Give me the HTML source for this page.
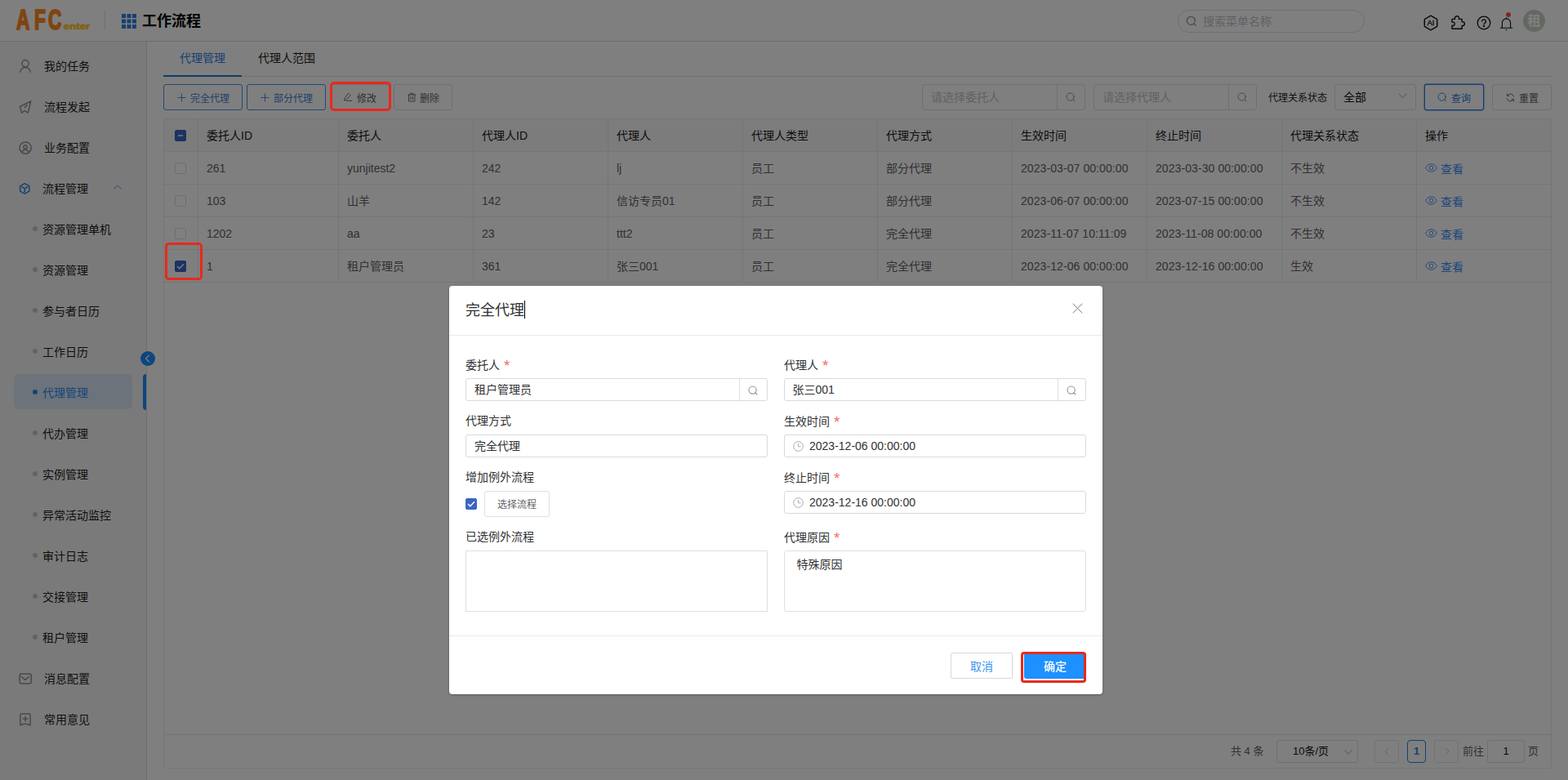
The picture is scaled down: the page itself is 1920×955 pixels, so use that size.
<!DOCTYPE html>
<html lang="zh-CN">
<head>
<meta charset="utf-8">
<title>工作流程 - 代理管理</title>
<style>
*{box-sizing:border-box;margin:0;padding:0}
html,body{width:1920px;height:955px;overflow:hidden;background:#fff}
body{font-family:"Liberation Sans","Noto Sans CJK SC",sans-serif;font-size:14px;color:#303133;position:relative}
.abs{position:absolute}
svg{display:block;overflow:visible}
.t{position:absolute;white-space:nowrap;line-height:20px;height:20px}
/* header */
#hd{position:absolute;left:0;top:0;width:1920px;height:51px;background:#fefefe;border-bottom:1px solid #dcdcdc}
#hd .vline{position:absolute;left:128px;top:12px;width:1px;height:24px;background:#e0e0e0}
#hd .title{position:absolute;left:174px;top:13px;font-size:18px;font-weight:bold;line-height:26px;color:#000}
#search{position:absolute;left:1442px;top:12px;width:229px;height:28px;border:1px solid #dcdfe6;border-radius:14px}
#search span{position:absolute;left:30px;top:0;line-height:26px;font-size:14px;color:#c0c4cc}
/* sidebar */
#sb{position:absolute;left:0;top:51px;width:180px;height:904px;background:#f5f5f5;border-right:1px solid #dcdcdc}
.mi{position:absolute;left:0;width:179px;height:50px;line-height:50px;font-size:14px;color:#1c1c1c;white-space:nowrap}
.mi .ic{position:absolute;left:23px;top:17px;width:16px;height:16px;color:#909399}
.mi .tx{position:absolute;left:54px;top:0}
.mi.sub .tx{left:52px}
.mi .dot{position:absolute;left:40px;top:21px;width:6px;height:6px;border-radius:50%;background:#c6c6c6}
.mi.act{color:#2d8cf0}
.mi.act .dot{background:#1f8af5}
/* main */
#main{position:absolute;left:180px;top:51px;width:1740px;height:904px;background:#fff}
.btn{position:absolute;top:103px;height:32px;border:1px solid #dcdfe6;border-radius:3px;font-size:12px;color:#606266;white-space:nowrap;line-height:34px;background:#fff;overflow:hidden}
.btn.pri{border-color:#4a90e2;color:#3a7fd5}
.inp{position:absolute;top:103px;height:32px;border:1px solid #dcdfe6;border-radius:4px;background:#fff}
/* table */
#tb{position:absolute;left:200px;top:145px;width:1700px;height:796px;border:1px solid #e8eaee;border-radius:0 0 4px 4px}
.row{position:absolute;left:0;width:1698px;height:40px;border-bottom:1px solid #e8eaee;font-size:14px;color:#606266;line-height:41px;white-space:nowrap}
.row.h{background:#f8f8f9;color:#1a1a1a}
.row.sel{background:transparent}
.c{position:absolute;top:0;height:39px;border-left:1px solid #e8eaee;padding-left:10px;overflow:hidden}
.cb{position:absolute;left:13px;top:13px;width:14px;height:14px;border:1px solid #dcdfe6;border-radius:2px;background:#fff}
.cb.on{background:#3a67c0;border-color:#3a67c0}
.lk{color:#3d8ff5;position:relative;top:1px}
/* mask + dialog */
#mask{z-index:10;position:absolute;left:0;top:0;width:1920px;height:955px;background:rgba(0,0,0,.5)}
#dlg{z-index:11;position:absolute;left:550px;top:350px;width:800px;height:500px;background:#fff;border-radius:4px;box-shadow:0 1px 3px rgba(0,0,0,.3)}
#dlg .lab{position:absolute;font-size:14px;color:#303133;line-height:20px;white-space:nowrap}
#dlg .lab i{font-style:normal;color:#f56c6c;margin-left:5px;font-size:19px;line-height:20px;position:relative;top:2px;font-family:"Liberation Sans",sans-serif}
#dlg .fi{position:absolute;height:28px;width:370px;border:1px solid #d9dadd;border-radius:3px;font-size:14px;line-height:26px;color:#303133;white-space:nowrap}
.red{z-index:12;position:absolute;border:3px solid #e8291c;border-radius:5px}
</style>
</head>
<body>
<div id="hd">
<svg class="abs" style="left:18px;top:8px" width="96" height="32" viewBox="0 0 96 32" font-family="Liberation Sans, sans-serif" font-weight="bold"><text transform="scale(.66 1)" x="3.200 36.500 62" y="27.700" font-size="34.500" fill="#ff8a22" stroke="#ff8a22" stroke-width="1.700" stroke-linejoin="round" vector-effect="non-scaling-stroke">AFC</text><text x="59.800" y="28.200" font-size="11" fill="#ffc62e" stroke="#ffc62e" stroke-width="0.700" textLength="32.500" lengthAdjust="spacingAndGlyphs">enter</text></svg>
<div class="vline"></div>
<svg class="abs" style="left:149px;top:17px" width="18" height="18" viewBox="0 0 18 18" fill="#2f7fe6"><rect x="0" y="0" width="5" height="5"/><rect x="6.5" y="0" width="5" height="5"/><rect x="13" y="0" width="5" height="5"/><rect x="0" y="6.5" width="5" height="5"/><rect x="6.5" y="6.5" width="5" height="5"/><rect x="13" y="6.5" width="5" height="5"/><rect x="0" y="13" width="5" height="5"/><rect x="6.5" y="13" width="5" height="5"/><rect x="13" y="13" width="5" height="5"/></svg>
<div class="title">工作流程</div>
<div id="search"><svg class="abs" style="left:9.200px;top:5.800px" width="14" height="14" viewBox="0 0 14 14" fill="none" stroke="#909399" stroke-width="1.3"><circle cx="6.3" cy="6.3" r="5"/><path d="M10 10l2.6 2.6"/></svg><span>搜索菜单名称</span></div>
<svg class="abs" style="left:1742px;top:18px" width="20" height="20" viewBox="0 0 20 20" fill="none" stroke="#111" stroke-width="1.400" stroke-linejoin="round" stroke-linecap="round"><path d="M2.300 7.800V5.600L10 1.200l7.700 4.400v6.200M17.700 12.400v2L10 18.800l-7.700-4.400V8.400"/><circle cx="2.300" cy="8.800" r=".9" fill="#111" stroke="none"/><circle cx="17.700" cy="11.400" r=".9" fill="#111" stroke="none"/><text x="10" y="13.300" font-family="Liberation Sans, sans-serif" font-size="9.500" text-anchor="middle" fill="#111" stroke="#111" stroke-width=".3">AI</text></svg>
<svg class="abs" style="left:1776px;top:17px" width="20" height="20" viewBox="0 0 20 20" fill="none" stroke="#111" stroke-width="1.400" stroke-linejoin="round" stroke-linecap="round"><path d="M2 6.400h3.600a2.600 2.600 0 1 1 4.800 0h3.800v3.300a2.500 2.500 0 1 1 0 4.800v3.700H2v-3.900a2.300 2.300 0 1 0 0-4.200z"/></svg>
<svg class="abs" style="left:1808px;top:19px" width="18" height="18" viewBox="0 0 18 18" fill="none" stroke="#111" stroke-width="1.3" stroke-linecap="round"><circle cx="9" cy="9" r="7.8"/><path d="M6.6 7.2a2.4 2.4 0 1 1 3.4 2.2c-.7.4-1 .8-1 1.7"/><circle cx="9" cy="13.2" r=".5" fill="#111"/></svg>
<svg class="abs" style="left:1836px;top:20px" width="18" height="18" viewBox="0 0 18 18" fill="none" stroke="#111" stroke-width="1.100" stroke-linecap="round" stroke-linejoin="round"><path d="M1.300 14.200h14.400M3.400 14.200V8a5.100 5.100 0 0 1 10.200 0v6.200M8.500 2.600V1.900M8.200 16.600h.6"/></svg>
<div class="abs" style="left:1843.7px;top:14.700px;width:6.400px;height:6.400px;border-radius:50%;background:#ff4d4f"></div>
<div class="abs" style="left:1865px;top:12px;width:27px;height:27px;border-radius:50%;background:#c6d3c2;color:#fff;font-size:16px;font-weight:bold;line-height:27px;text-align:center">租</div>
</div>
<div id="sb">
<div class="mi" style="top:5px"><svg class="ic" viewBox="0 0 16 16" fill="none" stroke="currentColor" stroke-width="1.500" stroke-linecap="round" stroke-linejoin="round"><circle cx="8" cy="4.700" r="4.100"/><path d="M1.800 15.700a6.200 6.200 0 0 1 12.400 0" stroke-linecap="butt"/></svg><span class="tx">我的任务</span></div>
<div class="mi" style="top:55px"><svg class="ic" viewBox="0 0 16 16" fill="none" stroke="currentColor" stroke-width="1.500" stroke-linecap="round" stroke-linejoin="round"><path d="M14.800 1L1.400 7.500l2.300 7.700 3.500-2.700 4 2.700z"/><path d="M7 8.800l3.200-3.200"/></svg><span class="tx">流程发起</span></div>
<div class="mi" style="top:105px"><svg class="ic" viewBox="0 0 16 16" fill="none" stroke="currentColor" stroke-width="1.500" stroke-linecap="round" stroke-linejoin="round"><circle cx="8.100" cy="8.100" r="7.100"/><circle cx="8" cy="6.900" r="2.200"/><path d="M3.900 13.400a4.300 4.300 0 0 1 8.300 0"/></svg><span class="tx">业务配置</span></div>
<div class="mi sub" style="top:155px"><svg class="ic" style="color:#2f7fe6" viewBox="0 0 16 16" fill="none" stroke="currentColor" stroke-width="1.500" stroke-linecap="round" stroke-linejoin="round"><path d="M7.250 1.700l5.600 3.100v6.300l-5.600 3.100-5.600-3.100V4.800z"/><path d="M3.800 5.900l3.450 1.900 3.450-1.900M7.250 7.800v3.900"/></svg><span class="tx">流程管理</span><svg class="abs" style="left:139.200px;top:19.800px" width="10" height="6" viewBox="0 0 10 6" fill="none" stroke="#8fb6ea" stroke-width="1.1"><path d="M.5 5.500L5 1l4.500 4.500"/></svg></div>
<div class="mi sub" style="top:205px"><i class="dot"></i><span class="tx">资源管理单机</span></div>
<div class="mi sub" style="top:255px"><i class="dot"></i><span class="tx">资源管理</span></div>
<div class="mi sub" style="top:305px"><i class="dot"></i><span class="tx">参与者日历</span></div>
<div class="mi sub" style="top:355px"><i class="dot"></i><span class="tx">工作日历</span></div>
<div class="abs" style="left:17px;top:407px;width:145px;height:43px;border-radius:6px;background:#d9e6f7"></div><div class="abs" style="left:175px;top:407px;width:4px;height:44px;border-radius:4px 0 0 4px;background:#1a8cff"></div><div class="mi sub act" style="top:405px"><i class="dot"></i><span class="tx">代理管理</span></div>
<div class="mi sub" style="top:455px"><i class="dot"></i><span class="tx">代办管理</span></div>
<div class="mi sub" style="top:505px"><i class="dot"></i><span class="tx">实例管理</span></div>
<div class="mi sub" style="top:555px"><i class="dot"></i><span class="tx">异常活动监控</span></div>
<div class="mi sub" style="top:605px"><i class="dot"></i><span class="tx">审计日志</span></div>
<div class="mi sub" style="top:655px"><i class="dot"></i><span class="tx">交接管理</span></div>
<div class="mi sub" style="top:705px"><i class="dot"></i><span class="tx">租户管理</span></div>
<div class="mi" style="top:755px"><svg class="ic" viewBox="0 0 16 16" fill="none" stroke="currentColor" stroke-width="1.500" stroke-linecap="round" stroke-linejoin="round"><rect x="1.050" y="2" width="14.200" height="12.100" rx="2.300"/><path d="M3.200 5.500L7.900 9.300l4.700-3.800"/></svg><span class="tx">消息配置</span></div>
<div class="mi" style="top:805px"><svg class="ic" viewBox="0 0 16 16" fill="none" stroke="currentColor" stroke-width="1.500" stroke-linecap="round" stroke-linejoin="round"><path d="M1.900 15V2.200a1.200 1.200 0 0 1 1.200-1.200h9.800a1.200 1.200 0 0 1 1.200 1.200V15Q11 13.300 8 13.300T1.900 15z"/><path d="M5.100 7.100h5.800M8 4.200v5.900"/></svg><span class="tx">常用意见</span></div>
</div>
<div class="abs" style="left:172px;top:430px;width:18px;height:18px;border-radius:50%;background:#1a8cff;z-index:1"><svg class="abs" style="left:5px;top:4px" width="7" height="10" viewBox="0 0 7 10" fill="none" stroke="#fff" stroke-width="1.2"><path d="M5.800.8L1.500 5l4.300 4.200"/></svg></div>
<div id="main">
<div class="t" style="left:40px;top:10px;color:#2f7fe6">代理管理</div>
<div class="t" style="left:136px;top:10px;color:#1c1c1c">代理人范围</div>
<div class="abs" style="left:20px;top:42px;width:1700px;height:1px;background:#dcdfe6"></div>
<div class="abs" style="left:20px;top:41px;width:96px;height:2px;background:#1f78d6"></div>
</div>
<div class="btn pri" style="left:200px;width:97px"><svg class="abs" style="left:16px;top:10px" width="11" height="11" viewBox="0 0 11 11" fill="none" stroke="currentColor" stroke-width=".9"><path d="M5.500.5v10M.5 5.500h10"/></svg><span class="abs" style="left:32px;top:0">完全代理</span></div>
<div class="btn pri" style="left:302px;width:97px"><svg class="abs" style="left:16px;top:10px" width="11" height="11" viewBox="0 0 11 11" fill="none" stroke="currentColor" stroke-width=".9"><path d="M5.500.5v10M.5 5.500h10"/></svg><span class="abs" style="left:32px;top:0">部分代理</span></div>
<div class="btn" style="left:405px;width:72px"><svg class="abs" style="left:15px;top:9px" width="12" height="12" viewBox="0 0 12 12" fill="none" stroke="currentColor" stroke-width=".9" stroke-linejoin="round" stroke-linecap="round"><path d="M5.800 1.300l2.300 2.300-5.200 5.700-2.400.9.600-2.700z"/><path d="M3.500 10.400h6.300"/></svg><span class="abs" style="left:31px;top:0">修改</span></div>
<div class="btn" style="left:482px;width:72px"><svg class="abs" style="left:15.500px;top:9px" width="12" height="12" viewBox="0 0 12 12" fill="none" stroke="currentColor" stroke-width=".9" stroke-linejoin="round" stroke-linecap="round"><path d="M.6 3h9.300M3.500 2.800V1.300h3.500v1.500M1.600 3v8.100h7.300V3M4 5.300v3.600M6.500 5.300v3.600"/></svg><span class="abs" style="left:31px;top:0">删除</span></div>
<div class="inp" style="left:1129px;width:200px"><span class="abs" style="left:10px;top:0;line-height:30px;color:#c0c4cc">请选择委托人</span><i class="abs" style="left:164px;top:0;width:1px;height:30px;background:#dcdfe6"></i><svg class="abs" style="left:175px;top:9px" width="12" height="12" viewBox="0 0 12 12" fill="none" stroke="#909399" stroke-width="1" stroke-linecap="round"><circle cx="5.6" cy="5.6" r="4.600"/><path d="M9 9l2 2"/></svg></div>
<div class="inp" style="left:1339px;width:200px"><span class="abs" style="left:10px;top:0;line-height:30px;color:#c0c4cc">请选择代理人</span><i class="abs" style="left:164px;top:0;width:1px;height:30px;background:#dcdfe6"></i><svg class="abs" style="left:175px;top:9px" width="12" height="12" viewBox="0 0 12 12" fill="none" stroke="#909399" stroke-width="1" stroke-linecap="round"><circle cx="5.6" cy="5.6" r="4.600"/><path d="M9 9l2 2"/></svg></div>
<div class="t" style="left:1553px;top:109.600px;font-size:12px;color:#1c1c1c">代理关系状态</div>
<div class="inp" style="left:1634px;width:100px;border-radius:3px"><span class="abs" style="left:10px;top:0;line-height:30px;color:#111">全部</span><svg class="abs" style="left:76.500px;top:9.500px" width="11" height="7" viewBox="0 0 11 7" fill="none" stroke="#c0c4cc" stroke-width="1.100"><path d="M.5.700l5 5 5-5"/></svg></div>
<div class="btn" style="left:1744px;width:73px;border-color:#2a7fe0;color:#2a7fe0;border-radius:3px;box-shadow:0 0 0 .4px #2a7fe0"><svg class="abs" style="left:15.200px;top:9px" width="12" height="12" viewBox="0 0 12 12" fill="none" stroke="currentColor" stroke-width=".95" stroke-linecap="round"><circle cx="5.6" cy="5.6" r="4.600"/><path d="M9 9l2 2"/></svg><span class="abs" style="left:32px;top:0">查询</span></div>
<div class="btn" style="left:1827px;width:73px"><svg class="abs" style="left:16px;top:10px" width="11" height="11" viewBox="0 0 11 11" fill="none" stroke="currentColor" stroke-width=".9" stroke-linecap="round" stroke-linejoin="round"><path d="M9.700 4.200A4.400 4.400 0 0 0 1.800 3.100M1.300 6.800A4.400 4.400 0 0 0 9.200 7.900"/><path d="M1.600.9v2.400h2.400M9.400 10.100V7.700H7"/></svg><span class="abs" style="left:32px;top:0">重置</span></div>
<div id="tb">
<div class="row h" style="top:0"><i class="cb on" style="top:13px"><b class="abs" style="left:3px;top:5px;width:6px;height:2px;background:#fff;opacity:.7"></b></i><div class="c" style="left:41px;width:172px">委托人ID</div><div class="c" style="left:213px;width:165px">委托人</div><div class="c" style="left:378px;width:165px">代理人ID</div><div class="c" style="left:543px;width:165px">代理人</div><div class="c" style="left:708px;width:165px">代理人类型</div><div class="c" style="left:873px;width:165px">代理方式</div><div class="c" style="left:1038px;width:165px">生效时间</div><div class="c" style="left:1203px;width:165px">终止时间</div><div class="c" style="left:1368px;width:165px">代理关系状态</div><div class="c" style="left:1533px;width:165px">操作</div></div>
<div class="row" style="top:40px"><i class="cb"></i><div class="c" style="left:41px;width:172px">261</div><div class="c" style="left:213px;width:165px">yunjitest2</div><div class="c" style="left:378px;width:165px">242</div><div class="c" style="left:543px;width:165px">lj</div><div class="c" style="left:708px;width:165px">员工</div><div class="c" style="left:873px;width:165px">部分代理</div><div class="c" style="left:1038px;width:165px;letter-spacing:.08px">2023-03-07 00:00:00</div><div class="c" style="left:1203px;width:165px;letter-spacing:.08px">2023-03-30 00:00:00</div><div class="c" style="left:1368px;width:165px">不生效</div><div class="c" style="left:1533px;width:165px"><svg class="abs" style="left:10px;top:14px" width="15" height="11" viewBox="0 0 15 11" fill="none" stroke="#3d8ff5" stroke-width="1"><path d="M.6 5.500C2.400 2.400 4.800.8 7.500.8s5.100 1.600 6.900 4.700c-1.800 3.100-4.200 4.700-6.900 4.700S2.400 8.600.6 5.500z"/><circle cx="7.500" cy="5.500" r="2.300"/></svg><span class="lk" style="margin-left:19px">查看</span></div></div>
<div class="row" style="top:80px"><i class="cb"></i><div class="c" style="left:41px;width:172px">103</div><div class="c" style="left:213px;width:165px">山羊</div><div class="c" style="left:378px;width:165px">142</div><div class="c" style="left:543px;width:165px">信访专员01</div><div class="c" style="left:708px;width:165px">员工</div><div class="c" style="left:873px;width:165px">部分代理</div><div class="c" style="left:1038px;width:165px;letter-spacing:.08px">2023-06-07 00:00:00</div><div class="c" style="left:1203px;width:165px;letter-spacing:.08px">2023-07-15 00:00:00</div><div class="c" style="left:1368px;width:165px">不生效</div><div class="c" style="left:1533px;width:165px"><svg class="abs" style="left:10px;top:14px" width="15" height="11" viewBox="0 0 15 11" fill="none" stroke="#3d8ff5" stroke-width="1"><path d="M.6 5.500C2.400 2.400 4.800.8 7.500.8s5.100 1.600 6.900 4.700c-1.800 3.100-4.200 4.700-6.900 4.700S2.400 8.600.6 5.500z"/><circle cx="7.500" cy="5.500" r="2.300"/></svg><span class="lk" style="margin-left:19px">查看</span></div></div>
<div class="row" style="top:120px"><i class="cb"></i><div class="c" style="left:41px;width:172px">1202</div><div class="c" style="left:213px;width:165px">aa</div><div class="c" style="left:378px;width:165px">23</div><div class="c" style="left:543px;width:165px">ttt2</div><div class="c" style="left:708px;width:165px">员工</div><div class="c" style="left:873px;width:165px">完全代理</div><div class="c" style="left:1038px;width:165px;letter-spacing:.08px">2023-11-07 10:11:09</div><div class="c" style="left:1203px;width:165px;letter-spacing:.08px">2023-11-08 00:00:00</div><div class="c" style="left:1368px;width:165px">不生效</div><div class="c" style="left:1533px;width:165px"><svg class="abs" style="left:10px;top:14px" width="15" height="11" viewBox="0 0 15 11" fill="none" stroke="#3d8ff5" stroke-width="1"><path d="M.6 5.500C2.400 2.400 4.800.8 7.500.8s5.100 1.600 6.900 4.700c-1.800 3.100-4.200 4.700-6.900 4.700S2.400 8.600.6 5.500z"/><circle cx="7.500" cy="5.500" r="2.300"/></svg><span class="lk" style="margin-left:19px">查看</span></div></div>
<div class="row sel" style="top:160px"><i class="cb on"><svg class="abs" style="left:1px;top:2px" width="10" height="8" viewBox="0 0 10 8" fill="none" stroke="#fff" stroke-width="1.300"><path d="M1 4l2.800 2.800L9 1.200"/></svg></i><div class="c" style="left:41px;width:172px">1</div><div class="c" style="left:213px;width:165px">租户管理员</div><div class="c" style="left:378px;width:165px">361</div><div class="c" style="left:543px;width:165px">张三001</div><div class="c" style="left:708px;width:165px">员工</div><div class="c" style="left:873px;width:165px">完全代理</div><div class="c" style="left:1038px;width:165px;letter-spacing:.08px">2023-12-06 00:00:00</div><div class="c" style="left:1203px;width:165px;letter-spacing:.08px">2023-12-16 00:00:00</div><div class="c" style="left:1368px;width:165px">生效</div><div class="c" style="left:1533px;width:165px"><svg class="abs" style="left:10px;top:14px" width="15" height="11" viewBox="0 0 15 11" fill="none" stroke="#3d8ff5" stroke-width="1"><path d="M.6 5.500C2.400 2.400 4.800.8 7.500.8s5.100 1.600 6.900 4.700c-1.800 3.100-4.200 4.700-6.900 4.700S2.400 8.600.6 5.500z"/><circle cx="7.500" cy="5.500" r="2.300"/></svg><span class="lk" style="margin-left:19px">查看</span></div></div>
<div class="abs" style="left:0;top:753px;width:1698px;height:1px;background:#e4e7ed"></div>
<div class="abs" style="left:0;top:754px;width:1698px;height:39px;font-size:13px;color:#606266;white-space:nowrap">
<span class="abs" style="left:1306px;top:10px;line-height:20px">共 4 条</span>
<div class="abs" style="left:1362px;top:6px;width:100px;height:28px;border:1px solid #dcdfe6;border-radius:3px"><span class="abs" style="left:19px;top:0;line-height:26px;color:#111">10条/页</span><svg class="abs" style="left:82px;top:11px" width="10" height="6" viewBox="0 0 10 6" fill="none" stroke="#c0c4cc" stroke-width="1.100"><path d="M.5.500L5 5 9.500.5"/></svg></div>
<div class="abs" style="left:1482px;top:6px;width:30px;height:28px;border:1px solid #e4e7ed;border-radius:3px"><svg class="abs" style="left:11px;top:8px" width="6" height="10" viewBox="0 0 6 10" fill="none" stroke="#c0c4cc" stroke-width=".9"><path d="M5.300.7L1 5l4.300 4.300"/></svg></div>
<div class="abs" style="left:1522px;top:6px;width:23px;height:28px;border:1px solid #2a7fe0;border-radius:4px;color:#2a7fe0;font-weight:bold;text-align:center;line-height:26px">1</div>
<div class="abs" style="left:1555px;top:6px;width:30px;height:28px;border:1px solid #e4e7ed;border-radius:3px"><svg class="abs" style="left:12px;top:8px" width="6" height="10" viewBox="0 0 6 10" fill="none" stroke="#c0c4cc" stroke-width=".9"><path d="M.7.700L5 5 .7 9.300"/></svg></div>
<span class="abs" style="left:1590px;top:10px;line-height:20px">前往</span>
<div class="abs" style="left:1620px;top:6px;width:46px;height:28px;border:1px solid #dcdfe6;border-radius:3px;text-align:center;line-height:26px;color:#111">1</div>
<span class="abs" style="left:1670px;top:10px;line-height:20px">页</span>
</div>
</div>
<div id="mask"></div>
<div id="dlg">
<div class="abs" style="left:20px;top:17px;font-size:18px;line-height:26px;color:#303133;white-space:nowrap">完全代理</div>
<div class="abs" style="left:92px;top:18px;width:1px;height:22px;background:#000"></div>
<svg class="abs" style="left:763px;top:21px" width="13" height="13" viewBox="0 0 13 13" fill="none" stroke="#808388" stroke-width="1"><path d="M.7.700l11.600 11.600M12.300.7L.7 12.300"/></svg>
<div class="abs" style="left:0;top:60px;width:800px;height:1px;background:#e8eaec"></div>
<div class="lab" style="left:20px;top:86px">委托人<i>*</i></div>
<div class="fi" style="left:20px;top:113px"><span class="abs" style="left:10px">租户管理员</span><i class="abs" style="left:334px;top:0;width:1px;height:26px;background:#dcdfe6"></i><svg class="abs" style="left:344.500px;top:8px" width="12" height="12" viewBox="0 0 12 12" fill="none" stroke="#909399" stroke-width="1.100" stroke-linecap="round"><circle cx="5.600" cy="5.600" r="4.600"/><path d="M9 9l2 2"/></svg></div>
<div class="lab" style="left:410px;top:86px">代理人<i>*</i></div>
<div class="fi" style="left:410px;top:113px"><span class="abs" style="left:9.500px">张三001</span><i class="abs" style="left:334px;top:0;width:1px;height:26px;background:#dcdfe6"></i><svg class="abs" style="left:344.500px;top:8px" width="12" height="12" viewBox="0 0 12 12" fill="none" stroke="#909399" stroke-width="1.100" stroke-linecap="round"><circle cx="5.600" cy="5.600" r="4.600"/><path d="M9 9l2 2"/></svg></div>
<div class="lab" style="left:20px;top:155px">代理方式</div>
<div class="fi" style="left:20px;top:182px"><span class="abs" style="left:10px">完全代理</span></div>
<div class="lab" style="left:410px;top:155px">生效时间<i>*</i></div>
<div class="fi" style="left:410px;top:182px"><svg class="abs" style="left:9.500px;top:6.700px" width="13" height="13" viewBox="0 0 13 13" fill="none" stroke="#a8abb2" stroke-width="1"><circle cx="6.500" cy="6.500" r="5.800"/><path d="M6.500 3v3.800h3"/></svg><span class="abs" style="left:30px">2023-12-06 00:00:00</span></div>
<div class="lab" style="left:20px;top:224px">增加例外流程</div>
<i class="cb on" style="left:20px;top:260px"><svg class="abs" style="left:1px;top:2px" width="10" height="8" viewBox="0 0 10 8" fill="none" stroke="#fff" stroke-width="1.300"><path d="M1 4l2.800 2.800L9 1.200"/></svg></i>
<div class="abs" style="left:43px;top:251px;width:80px;height:32px;border:1px solid #dcdfe6;border-radius:3px;font-size:12px;color:#606266;line-height:33px;text-align:center;overflow:hidden">选择流程</div>
<div class="lab" style="left:410px;top:224px">终止时间<i>*</i></div>
<div class="fi" style="left:410px;top:251px"><svg class="abs" style="left:9.500px;top:6.700px" width="13" height="13" viewBox="0 0 13 13" fill="none" stroke="#a8abb2" stroke-width="1"><circle cx="6.500" cy="6.500" r="5.800"/><path d="M6.500 3v3.800h3"/></svg><span class="abs" style="left:30px">2023-12-16 00:00:00</span></div>
<div class="lab" style="left:20px;top:297px">已选例外流程</div>
<div class="abs" style="left:20px;top:324px;width:370px;height:75px;border:1px solid #dcdfe6"></div>
<div class="lab" style="left:410px;top:297px">代理原因<i>*</i></div>
<div class="abs" style="left:410px;top:324px;width:370px;height:75px;border:1px solid #dcdfe6;border-radius:3px"><span class="abs" style="left:14.500px;top:6px;line-height:20px;white-space:nowrap">特殊原因</span></div>
<div class="abs" style="left:0;top:428px;width:800px;height:1px;background:#e8eaec"></div>
<div class="abs" style="left:614px;top:449px;width:76px;height:32px;border:1px solid #d5d9e0;border-radius:2px;color:#3a96f0;line-height:32px;text-align:center;overflow:hidden">取消</div>
<div class="abs" style="left:704px;top:449px;width:76px;height:32px;border-radius:3px;background:#1e90ff;color:#fff;line-height:34px;text-align:center;overflow:hidden;font-weight:500">确定</div>
</div>
<div class="red" style="left:403.700px;top:100.200px;width:75.700px;height:36.100px;border-width:3.400px"></div>
<div class="red" style="left:202.400px;top:297.300px;width:45.200px;height:46.200px;border-width:3.700px;border-radius:4.500px"></div>
<div class="red" style="left:1249.800px;top:798.400px;width:80.700px;height:38.100px;border-radius:4px;border-width:3.200px"></div>
</body>
</html>
